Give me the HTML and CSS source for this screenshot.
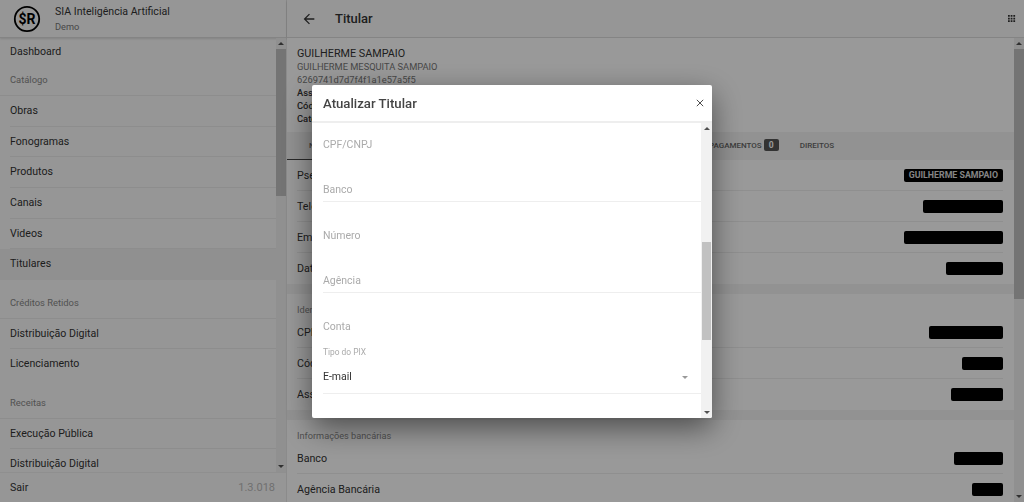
FILE: index.html
```html
<!DOCTYPE html>
<html>
  <head>
    <title>Titular</title>
    <meta charset="UTF-8" />
    <link rel="stylesheet" href="styles.css">
  </head>
  <body>
    <div class="app">
      <aside class="sidebar">
        <div class="brand">
          <svg class="logo" viewBox="0 0 28 28" width="28" height="28">
            <circle cx="14" cy="14" r="12.2" fill="none" stroke="#000" stroke-width="1.8" />
            <text x="14" y="19" text-anchor="middle" class="logo-text">$R</text>
          </svg>
          <div>
            <div class="brand-name">SIA Inteligência Artificial</div>
            <div class="brand-sub">Demo</div>
          </div>
        </div>
        <div class="side-scroll">
          <nav class="nav">
            <a class="nav-item nav-first">Dashboard</a>
            <div class="nav-title">Catálogo</div>
            <a class="nav-item">Obras</a>
            <a class="nav-item">Fonogramas</a>
            <a class="nav-item">Produtos</a>
            <a class="nav-item">Canais</a>
            <a class="nav-item">Videos</a>
            <a class="nav-item nav-active">Titulares</a>
            <div class="nav-title">Créditos Retidos</div>
            <a class="nav-item">Distribuição Digital</a>
            <a class="nav-item nav-last">Licenciamento</a>
            <div class="nav-title">Receitas</div>
            <a class="nav-item">Execução Pública</a>
            <a class="nav-item">Distribuição Digital</a>
          </nav>
          <div class="scrollbar">
            <span class="arrow-up"></span>
            <div class="track"><div class="thumb thumb-side"></div></div>
            <span class="arrow-down"></span>
          </div>
        </div>
        <div class="side-footer">
          <span>Sair</span>
          <span class="version">1.3.018</span>
        </div>
      </aside>

      <main class="main">
        <header class="topbar">
          <svg class="back" viewBox="0 0 24 24" width="16" height="16">
            <path d="M20 11H7.8l5.6-5.6L12 4l-8 8 8 8 1.4-1.4L7.8 13H20z" />
          </svg>
          <h1 class="page-title">Titular</h1>
          <svg class="apps" viewBox="0 0 9 9" width="8" height="8">
            <path d="M0 0h2v2H0zM3 0h2v2H3zM6 0h2v2H6zM0 3h2v2H0zM3 3h2v2H3zM6 3h2v2H6zM0 6h2v2H0zM3 6h2v2H3zM6 6h2v2H6z" />
          </svg>
        </header>
        <div class="main-scroll">
          <div class="content">
            <section class="person">
              <div class="person-name">GUILHERME SAMPAIO</div>
              <div class="person-muted">GUILHERME MESQUITA SAMPAIO</div>
              <div class="person-muted">6269741d7d7f4f1a1e57a5f5</div>
              <div class="person-line"><b>Associação</b></div>
              <div class="person-line"><b>Código</b></div>
              <div class="person-line"><b>Categoria</b></div>
            </section>
            <div class="tabs">
              <span class="tab tab-active">NOME</span>
              <span class="tab tab-pay">PAGAMENTOS <em class="count">0</em></span>
              <span class="tab">DIREITOS</span>
            </div>
            <section class="card">
              <div class="row"><span>Pseudônimo</span><span class="chip">GUILHERME SAMPAIO</span></div>
              <div class="row"><span>Telefone</span><span class="mask mask-80"></span></div>
              <div class="row"><span>Email</span><span class="mask mask-99"></span></div>
              <div class="row"><span>Data</span><span class="mask mask-57"></span></div>
            </section>
            <section class="card">
              <div class="card-title">Identificação</div>
              <div class="row"><span>CPF</span><span class="mask mask-74"></span></div>
              <div class="row"><span>Código</span><span class="mask mask-41"></span></div>
              <div class="row"><span>Associação</span><span class="mask mask-52"></span></div>
            </section>
            <section class="card">
              <div class="card-title">Informações bancárias</div>
              <div class="row"><span>Banco</span><span class="mask mask-49"></span></div>
              <div class="row"><span>Agência Bancária</span><span class="mask mask-31"></span></div>
            </section>
          </div>
          <div class="scrollbar">
            <span class="arrow-up"></span>
            <div class="track"><div class="thumb thumb-main"></div></div>
            <span class="arrow-down"></span>
          </div>
        </div>
      </main>
    </div>

    <div class="overlay">
      <div class="modal">
        <div class="modal-head">
          <h2 class="modal-title">Atualizar Titular</h2>
          <svg class="close" viewBox="0 0 10 10" width="8" height="8">
            <path d="M1 1l8 8M9 1l-8 8" />
          </svg>
        </div>
        <div class="modal-body">
          <form class="form">
            <div class="field field-first">CPF/CNPJ</div>
            <div class="field field-line">Banco</div>
            <div class="field">Número</div>
            <div class="field field-line">Agência</div>
            <div class="field">Conta</div>
            <div class="select">
              <label class="select-label">Tipo do PIX</label>
              <div class="select-value">E-mail<span class="caret"></span></div>
            </div>
          </form>
          <div class="scrollbar scrollbar-modal">
            <span class="arrow-up"></span>
            <div class="track"><div class="thumb thumb-modal"></div></div>
            <span class="arrow-down"></span>
          </div>
        </div>
      </div>
    </div>
  </body>
</html>
```

FILE: styles.css
```css
* {
  box-sizing: border-box;
}

html,
body {
  height: 100%;
}

body {
  margin: 0;
  overflow: hidden;
  font-family: Roboto, "Liberation Sans", sans-serif;
  font-size: 11px;
  color: #333;
  background: #f4f4f4;
}

.app {
  display: flex;
  height: 502px;
}

/* sidebar */
.sidebar {
  display: flex;
  flex-direction: column;
  width: 287px;
  flex-shrink: 0;
  border-right: 1px solid #e8e8e8;
  background: #fafafa;
}

.brand {
  display: flex;
  align-items: center;
  gap: 14px;
  height: 38px;
  padding-left: 13px;
  border-bottom: 1px solid #ddd;
  box-shadow: 0 1px 2px rgba(0, 0, 0, 0.12);
  flex-shrink: 0;
}

.logo-text {
  font-size: 14px;
  font-weight: 700;
  fill: #000;
}

.brand-name {
  font-size: 10.6px;
  line-height: 14px;
}

.brand-sub {
  font-size: 9.2px;
  line-height: 13px;
  margin-top: 1px;
  color: #777;
}

.side-scroll {
  display: flex;
  flex: 1;
  min-height: 0;
}

.nav {
  flex: 1;
  min-width: 0;
  height: 434px;
  overflow: hidden;
}

.nav-item {
  display: block;
  height: 30.7px;
  line-height: 29px;
  padding-left: 10px;
  font-size: 10.6px;
  position: relative;
  color: #333;
}

.nav-item::after {
  content: "";
  position: absolute;
  left: 10px;
  right: 0;
  bottom: 0;
  border-bottom: 1px solid #ececec;
}

.nav-first {
  height: 27px;
  line-height: 27px;
}

.nav-first::after,
.nav-active::after,
.nav-last::after {
  display: none;
}

.nav-active {
  line-height: 30px;
  background: #f0f0f0;
}

.nav-title {
  height: 30.5px;
  margin-top: 8px;
  padding: 8px 0 0 10px;
  font-size: 9.4px;
  line-height: 14px;
  color: #888;
  border-bottom: 1px solid #ececec;
}

.nav-first + .nav-title {
  height: 31px;
  margin-top: 0;
}

.side-footer {
  display: flex;
  justify-content: space-between;
  align-items: center;
  height: 30px;
  padding: 0 11px 1px 10px;
  font-size: 10.6px;
  border-top: 1px solid #eee;
  flex-shrink: 0;
}

.version {
  color: #bbb;
  font-size: 11px;
}

/* fake scrollbars, same look as the classic ones */
.scrollbar {
  display: flex;
  flex-direction: column;
  align-items: center;
  width: 10px;
  flex-shrink: 0;
  background: #f1f1f1;
}

.scrollbar-modal {
  width: 11px;
  padding: 0 1px;
}

.track {
  flex: 1;
  width: 100%;
  min-height: 0;
}

.thumb {
  width: 100%;
  background: #c1c1c1;
}

.thumb-side {
  height: 147px;
}

.thumb-main {
  height: 250px;
}

.thumb-modal {
  height: 98px;
  margin-top: 108px;
}

.arrow-up,
.arrow-down {
  width: 0;
  height: 0;
  margin: 4px 0;
  border-left: 3px solid transparent;
  border-right: 3px solid transparent;
  flex-shrink: 0;
}

.arrow-up {
  border-bottom: 3px solid #505050;
}

.arrow-down {
  border-top: 3px solid #505050;
}

/* main column */
.main {
  display: flex;
  flex-direction: column;
  flex: 1;
  min-width: 0;
}

.topbar {
  display: flex;
  align-items: center;
  height: 38px;
  padding: 0 8px 0 14px;
  background: #fafafa;
  border-bottom: 1px solid #ddd;
  box-shadow: 0 1px 2px rgba(0, 0, 0, 0.12);
  flex-shrink: 0;
}

.back {
  fill: #333;
}

.page-title {
  flex: 1;
  margin: 0 0 0 18px;
  font-size: 13px;
  font-weight: 500;
}

.apps {
  fill: #333;
}

.main-scroll {
  display: flex;
  flex: 1;
  min-height: 0;
}

.content {
  flex: 1;
  min-width: 0;
  height: 464px;
  overflow: hidden;
}

.person {
  height: 94px;
  padding: 9px 10px 0;
  font-size: 10.8px;
  line-height: 13px;
  background: #fff;
}

.person-name {
  color: #333;
}

.person-muted {
  font-size: 9.3px;
  color: #777;
}

.person-line {
  font-size: 9.4px;
}

.person-line b {
  font-weight: 500;
}

.tabs {
  display: flex;
  align-items: center;
  height: 28px;
  background: #f3f3f3;
  font-size: 8px;
  font-weight: 500;
  color: #666;
}

.tab {
  line-height: 28px;
}

.tab-active {
  width: 58px;
  padding-left: 22px;
  height: 28px;
  border-bottom: 1px solid #444;
}

.tab-pay {
  margin-left: 364px;
  margin-right: 21px;
}

.count {
  display: inline-block;
  min-width: 15px;
  padding: 0 4px;
  border-radius: 2px;
  background: #555;
  color: #fff;
  font-style: normal;
  font-size: 8.5px;
  font-weight: 700;
  line-height: 12px;
  text-align: center;
}

.card {
  background: #fff;
  margin-bottom: 10px;
  padding: 0 11px 0 10px;
}

.card-title {
  padding-top: 9px;
  font-size: 9.2px;
  line-height: 14px;
  color: #888;
}

.row {
  display: flex;
  justify-content: space-between;
  align-items: center;
  height: 31px;
  font-size: 10.7px;
  color: #333;
  border-bottom: 1px solid #eee;
}

.row:last-child {
  border-bottom: 0;
}

.chip {
  padding: 0 5px;
  border-radius: 2px;
  background: #000;
  color: #ddd;
  font-size: 8.8px;
  font-weight: 700;
  line-height: 13px;
}

.mask {
  height: 13px;
  border-radius: 2px;
  background: #000;
}

.mask-99 { width: 99px; }
.mask-80 { width: 80px; }
.mask-74 { width: 74px; }
.mask-57 { width: 57px; }
.mask-52 { width: 52px; }
.mask-49 { width: 49px; }
.mask-41 { width: 41px; }
.mask-31 { width: 31px; }

/* dialog */
.overlay {
  position: fixed;
  inset: 0;
  display: flex;
  justify-content: center;
  align-items: flex-start;
  padding-top: 85px;
  background: rgba(0, 0, 0, 0.4);
}

.modal {
  width: 400px;
  height: 333px;
  display: flex;
  flex-direction: column;
  background: #fff;
  border-radius: 2px;
  overflow: hidden;
  box-shadow: 0 10px 30px rgba(0, 0, 0, 0.5);
}

.modal-head {
  display: flex;
  justify-content: space-between;
  align-items: center;
  height: 38px;
  padding: 0 8px 0 11px;
  border-bottom: 2px solid #eee;
  flex-shrink: 0;
}

.modal-title {
  margin: 1px 0 0;
  font-size: 13.2px;
  font-weight: 500;
  color: #444;
}

.close {
  stroke: #444;
  stroke-width: 1.2;
  fill: none;
}

.modal-body {
  display: flex;
  flex: 1;
  min-height: 0;
}

.form {
  flex: 1;
  min-width: 0;
  padding: 0 0 0 11px;
  overflow: hidden;
}

.field {
  display: flex;
  align-items: flex-end;
  height: 45.6px;
  padding-bottom: 4px;
  font-size: 10.5px;
  line-height: 14px;
  color: #aaa;
}

.field-first {
  height: 33px;
}

.field-line {
  border-bottom: 1px solid #eee;
  padding-bottom: 4px;
}

.select {
  height: 56px;
  border-bottom: 1px solid #eee;
}

.select-label {
  display: block;
  padding-top: 8px;
  font-size: 8.4px;
  line-height: 12px;
  color: #aaa;
}

.select-value {
  display: flex;
  justify-content: space-between;
  align-items: center;
  margin-top: 11px;
  padding-right: 13px;
  font-size: 10.5px;
  line-height: 16px;
  color: #333;
}

.caret {
  width: 0;
  height: 0;
  border-left: 3.5px solid transparent;
  border-right: 3.5px solid transparent;
  border-top: 3.5px solid #999;
}
```
